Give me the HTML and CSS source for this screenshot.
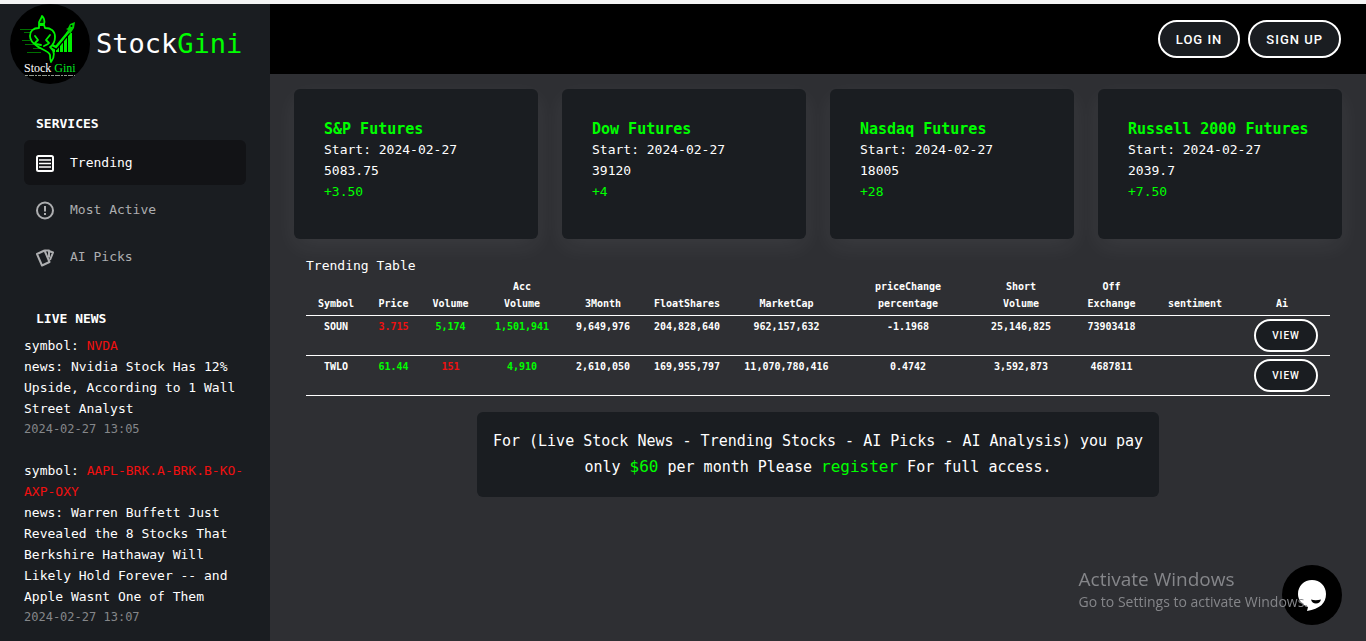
FILE: index.html
```html
<!DOCTYPE html>
<html lang="en">
<head>
<meta charset="utf-8">
<title>StockGini</title>
<link rel="stylesheet" href="styles.css">
</head>
<body>
<div class="app">
  <aside class="sidebar">
    <a class="brand" href="#">
      <svg class="brand-logo" viewBox="0 0 80 80" role="img" aria-label="Stock Gini logo">
        <circle cx="40" cy="40" r="40" fill="#000"/>
        <path d="M10 25.500h15M14 28.500h8M12 36.500h8M15 40.500h9M17 48.500h14M23 44.500h8" stroke="#00a000" opacity=".7"/>
        <path d="M39 40l6 5V48h-5zM46 43h3v5h-3zM50 39h3v9h-3zM54 34h3v14h-3zM58 29h4v19h-4z" fill="#00f000"/>
        <path d="M38 39l8 4 14-17" fill="none" stroke="#000" stroke-width="5"/>
        <path d="M38 39l8 4 14-17" fill="none" stroke="#00f000" stroke-width="2.500"/>
        <path d="M65 18l-5 2-2 4-2 1 2 1-2 3 3-1 1 2 2-3 2-3z" fill="#00d000"/>
        <circle cx="61.500" cy="22" r="1" fill="#000"/>
        <g stroke="#00f000" stroke-width="1.800" stroke-linecap="round" stroke-linejoin="round">
          <path d="M29 24c-6 0-9 3-9 8 0 5 4 8 7 10 3 3 12 5 13 9 0 3 0 4 1 7 4-5 4-11-1-15 3-2 5-5 5-10 0-6-4-9-10-9l-1-3h-5z" fill="#000"/>
          <path d="M29 20c-1-3 2-4 3-8 3 3 3 5 2 8z" fill="#003000"/>
          <path d="M25 32l3 4-3 3M40 31l-4 5 3 3M26 40l5 1M38 40l-4 2" fill="none"/>
        </g>
        <text class="logo-name" x="14" y="68" fill="#fff">Stock <tspan fill="#00e820">Gini</tspan></text>
        <path d="M15 71.500h50" stroke="#8d978d" stroke-dasharray="3 1 5 1 2 1"/>
      </svg>
      <span class="brand-name">Stock<span class="up">Gini</span></span>
    </a>

    <nav class="services">
      <h2 class="side-title">SERVICES</h2>
      <a class="nav-item active" href="#">
        <svg class="nav-icon" viewBox="0 0 20 20" fill="none" stroke="currentColor" stroke-width="2"><rect x="2" y="3" width="16" height="15" rx="1.500"/><path d="M4 7h12M4 10.500h12M4 14h12" stroke-width="1.500"/></svg>
        <span>Trending</span>
      </a>
      <a class="nav-item" href="#">
        <svg class="nav-icon" viewBox="0 0 20 20" fill="none" stroke="currentColor" stroke-width="2"><circle cx="10" cy="10.500" r="8"/><path d="M10 6v5.500M10 13v2"/></svg>
        <span>Most Active</span>
      </a>
      <a class="nav-item" href="#">
        <svg class="nav-icon" viewBox="0 0 20 20" fill="none" stroke="currentColor" stroke-width="2" stroke-linejoin="round"><path d="M2 7l7.500-3.500L14.500 15 7 18.500z"/><path d="M10 3.500h4v7M14 4l4 1.500-3 7.500"/></svg>
        <span>AI Picks</span>
      </a>
    </nav>

    <section class="news">
      <h2 class="side-title">LIVE NEWS</h2>
      <article class="news-item">
        <p>symbol: <span class="down">NVDA</span></p>
        <p>news: Nvidia Stock Has 12% Upside, According to 1 Wall Street Analyst</p>
        <time>2024-02-27 13:05</time>
      </article>
      <article class="news-item">
        <p>symbol: <span class="down">AAPL-BRK.A-BRK.B-KO-AXP-OXY</span></p>
        <p>news: Warren Buffett Just Revealed the 8 Stocks That Berkshire Hathaway Will Likely Hold Forever -- and Apple Wasnt One of Them</p>
        <time>2024-02-27 13:07</time>
      </article>
    </section>
  </aside>

  <div class="page">
    <header class="topbar">
      <button class="pill" type="button">LOG IN</button>
      <button class="pill" type="button">SIGN UP</button>
    </header>
    <main class="content">
      <section class="cards">
        <article class="card"><h3>S&amp;P Futures</h3><p>Start: 2024-02-27</p><p>5083.75</p><p class="up">+3.50</p></article>
        <article class="card"><h3>Dow Futures</h3><p>Start: 2024-02-27</p><p>39120</p><p class="up">+4</p></article>
        <article class="card"><h3>Nasdaq Futures</h3><p>Start: 2024-02-27</p><p>18005</p><p class="up">+28</p></article>
        <article class="card"><h3>Russell 2000 Futures</h3><p>Start: 2024-02-27</p><p>2039.7</p><p class="up">+7.50</p></article>
      </section>

      <section class="trending">
        <h2 class="table-title">Trending Table</h2>
        <table class="stocks">
          <colgroup>
            <col class="c-symbol"><col class="c-price"><col class="c-volume"><col class="c-acc"><col class="c-month"><col class="c-float"><col class="c-cap"><col class="c-change"><col class="c-short"><col class="c-off"><col class="c-sentiment"><col class="c-ai">
          </colgroup>
          <thead>
            <tr><th>Symbol</th><th>Price</th><th>Volume</th><th>Acc<br>Volume</th><th>3Month</th><th>FloatShares</th><th>MarketCap</th><th>priceChange<br>percentage</th><th>Short<br>Volume</th><th>Off<br>Exchange</th><th>sentiment</th><th>Ai</th></tr>
          </thead>
          <tbody>
            <tr><td>SOUN</td><td class="down">3.715</td><td class="up">5,174</td><td class="up">1,501,941</td><td>9,649,976</td><td>204,828,640</td><td>962,157,632</td><td>-1.1968</td><td>25,146,825</td><td>73903418</td><td></td><td class="action"><button class="pill small" type="button">VIEW</button></td></tr>
            <tr><td>TWLO</td><td class="up">61.44</td><td class="down">151</td><td class="up">4,910</td><td>2,610,050</td><td>169,955,797</td><td>11,070,780,416</td><td>0.4742</td><td>3,592,873</td><td>4687811</td><td></td><td class="action"><button class="pill small" type="button">VIEW</button></td></tr>
          </tbody>
        </table>
      </section>

      <p class="banner">For (Live Stock News - Trending Stocks - AI Picks - AI Analysis) you pay only <span class="offer">$60</span> per month Please <a class="offer" href="#">register</a> For full access.</p>
    </main>
  </div>
</div>

<button class="chat" type="button" aria-label="Open chat">
  <svg viewBox="0 0 60 60"><path d="M30 15c8 0 14 6 14 14 0 9-6 15-19 17l1-4c-6-2-10-7-10-13 0-8 6-14 14-14z" fill="#fff"/><path d="M29 34.500q4.500 1.500 10 0-1 4-5 4t-5-4z" fill="#000"/></svg>
</button>
<div class="watermark">
  <p class="watermark-title">Activate Windows</p>
  <p>Go to Settings to activate Windows.</p>
</div>
</body>
</html>
```
FILE: styles.css
```css
* { box-sizing: border-box; }
body, h2, h3, p { margin: 0; }
html, body { height: 100%; }
body {
  overflow: hidden;
  background: #2e2f33;
  color: #fff;
  font: 13px/21px "DejaVu Sans Mono", "Liberation Mono", monospace;
}
a { color: inherit; text-decoration: none; }
.up { color: #00ff00; }
.down { color: #f01010; }

.app {
  display: flex;
  min-height: 100%;
  border-top: 4px solid #f4f4f4;
}

/* Sidebar */
.sidebar {
  flex: 0 0 270px;
  padding: 0 24px;
  background: #1a1d21;
}
.brand {
  display: flex;
  align-items: center;
  gap: 6px;
  margin: 0 -14px;
}
.brand-logo { width: 80px; height: 80px; flex: none; }
.logo-name { font: 12px "Liberation Serif", serif; }
.brand-name { font-size: 27px; line-height: 40px; }
.services { padding-top: 29px; }
.side-title {
  padding-left: 12px;
  font-size: 13px;
  line-height: 21px;
}
.nav-item {
  display: flex;
  align-items: center;
  gap: 15px;
  height: 45px;
  margin-bottom: 2px;
  padding: 0 11px;
  border-radius: 6px;
  color: #adaeb0;
}
.services .side-title { margin-bottom: 6px; }
.nav-item.active { background: #121316; color: #fff; }
.nav-icon { width: 20px; height: 20px; }
.news { padding-top: 27px; }
.news .side-title { margin-bottom: 6px; }
.news-item { margin-bottom: 20px; }
.news-item time {
  display: block;
  color: #85878a;
  font-size: 12px;
}

/* Page */
.page { flex: 1; min-width: 0; }
.topbar {
  display: flex;
  align-items: center;
  justify-content: flex-end;
  gap: 8px;
  height: 70px;
  padding: 0 25px;
  background: #000;
}
.pill {
  height: 38px;
  padding: 0 16px;
  border: 2px solid #fff;
  border-radius: 19px;
  background: #1a1d21;
  color: #fff;
  font: 500 13px Roboto, sans-serif;
  letter-spacing: 1px;
}
.pill.small { height: 33px; font-size: 10px; }
.content { padding: 15px 24px; }
.cards {
  display: grid;
  grid-template-columns: repeat(4, 1fr);
  gap: 24px;
}
.card {
  min-height: 150px;
  padding: 30px;
  border-radius: 6px;
  background: #1a1d21;
  box-shadow: 0 8px 24px rgba(255, 255, 255, 0.06);
}
.card h3 {
  color: #00ff00;
  font-size: 15px;
  line-height: 20px;
  white-space: nowrap;
}
.trending { padding: 16px 12px; }
.table-title { font-size: 13px; font-weight: 400; line-height: 21px; }
.stocks {
  width: 100%;
  table-layout: fixed;
  border-collapse: collapse;
  font-size: 10px;
  line-height: 17px;
  text-align: center;
}
.stocks th, .stocks td { padding: 2px 0; border-bottom: 1px solid #fff; }
.stocks th { padding-bottom: 3px; vertical-align: bottom; }
.stocks td { height: 40px; vertical-align: top; font-weight: 700; }
.stocks .action { padding: 3px 0 3px 8px; }
.c-symbol { width: 60px; }
.c-price { width: 55px; }
.c-volume { width: 59px; }
.c-acc { width: 84px; }
.c-month { width: 78px; }
.c-float { width: 90px; }
.c-cap { width: 109px; }
.c-change { width: 134px; }
.c-short { width: 92px; }
.c-off { width: 89px; }
.c-sentiment { width: 78px; }
.c-ai { width: 96px; }

.banner {
  max-width: 682px;
  margin: 0 auto;
  padding: 16px 12px 17px;
  border-radius: 6px;
  background: #1a1d21;
  font-size: 15px;
  line-height: 26px;
  text-align: center;
}
.offer { color: #00ff00; font-size: 16px; }

/* Overlays */
.chat {
  position: fixed;
  right: 24px;
  bottom: 16px;
  width: 60px;
  height: 60px;
  padding: 0;
  border: 0;
  border-radius: 50%;
  background: #000;
}
.chat svg { display: block; }
.watermark {
  position: fixed;
  right: 58px;
  bottom: 29px;
  color: #85868a;
  font: 14px/20px "Open Sans", sans-serif;
  white-space: nowrap;
  pointer-events: none;
}
.watermark-title { font-size: 19px; line-height: 26px; }
```
